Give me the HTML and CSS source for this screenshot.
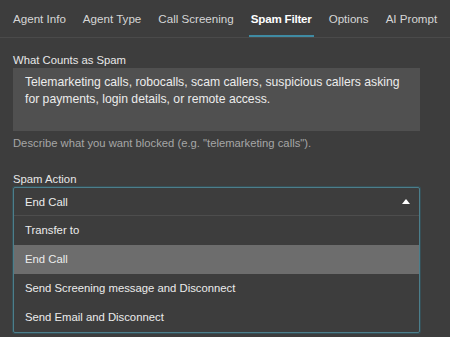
FILE: index.html
```html
<!DOCTYPE html>
<html>
<head>
<meta charset="utf-8">
<link rel="stylesheet" href="styles.css">
</head>
<body>
<nav class="tabs">
  <div class="tab">Agent Info</div>
  <div class="tab">Agent Type</div>
  <div class="tab">Call Screening</div>
  <div class="tab active">Spam Filter</div>
  <div class="tab">Options</div>
  <div class="tab">AI Prompt</div>
</nav>
<main class="content">
  <div class="label">What Counts as Spam</div>
  <div class="textarea">Telemarketing calls, robocalls, scam callers, suspicious callers asking for payments, login details, or remote access.</div>
  <div class="helper">Describe what you want blocked (e.g. "telemarketing calls").</div>
  <div class="label label-action">Spam Action</div>
  <div class="select">
    <div class="select-head">
      <span>End Call</span>
      <svg class="arrow" width="8" height="5" viewBox="0 0 8 5"><path d="M0 5 L4 0 L8 5 Z" fill="#ffffff"/></svg>
    </div>
    <div class="option">Transfer to</div>
    <div class="option selected">End Call</div>
    <div class="option">Send Screening message and Disconnect</div>
    <div class="option">Send Email and Disconnect</div>
  </div>
</main>
</body>
</html>
```
FILE: styles.css
```css
html, body {
  margin: 0;
  padding: 0;
  background: #3d3d3d;
  font-family: "Liberation Sans", Arial, sans-serif;
  color: #e6e6e6;
  width: 450px;
  height: 337px;
  overflow: hidden;
}
.tabs {
  display: flex;
  padding-left: 4.5px;
  height: 37px;
  border-bottom: 1px solid #4a4a4a;
}
.tab {
  padding: 0 8.5px;
  font-size: 11.6px;
  line-height: 37px;
  height: 35px;
  color: #d6d6d6;
  border-bottom: 2px solid transparent;
  white-space: nowrap;
}
.tab.active {
  color: #ffffff;
  font-weight: bold;
  border-bottom-color: #3f8ba3;
  padding: 0 2px;
  margin: 0 6.5px;
  letter-spacing: -0.2px;
}
.content {
  padding: 15px 30px 0 13px;
}
.label {
  font-size: 11.3px;
  line-height: 14px;
  color: #e8e8e8;
}
.textarea {
  margin-top: 1px;
  background: #505050;
  height: 51px;
  padding: 6px 8px 6px 12px;
  font-size: 12.2px;
  line-height: 17px;
  color: #ececec;
}
.helper {
  margin-top: 5px;
  font-size: 11.25px;
  line-height: 14px;
  color: #a6a6a6;
}
.label-action {
  margin-top: 22px;
}
.select {
  margin-top: 1px;
  border: 1px solid #4c7e8b;
  box-shadow: 0 0 0 1px #364f56;
  border-radius: 2px;
}
.select-head {
  display: flex;
  align-items: center;
  justify-content: space-between;
  height: 27px;
  padding: 0 9px 0 11px;
  font-size: 11.3px;
  color: #ececec;
  border-bottom: 1px solid #4d4d4d;
}
.arrow {
  display: block;
}
.option {
  height: 29px;
  line-height: 29px;
  padding-left: 11px;
  font-size: 11.3px;
  color: #ececec;
}
.option.selected {
  background: #6d6d6d;
}
```
